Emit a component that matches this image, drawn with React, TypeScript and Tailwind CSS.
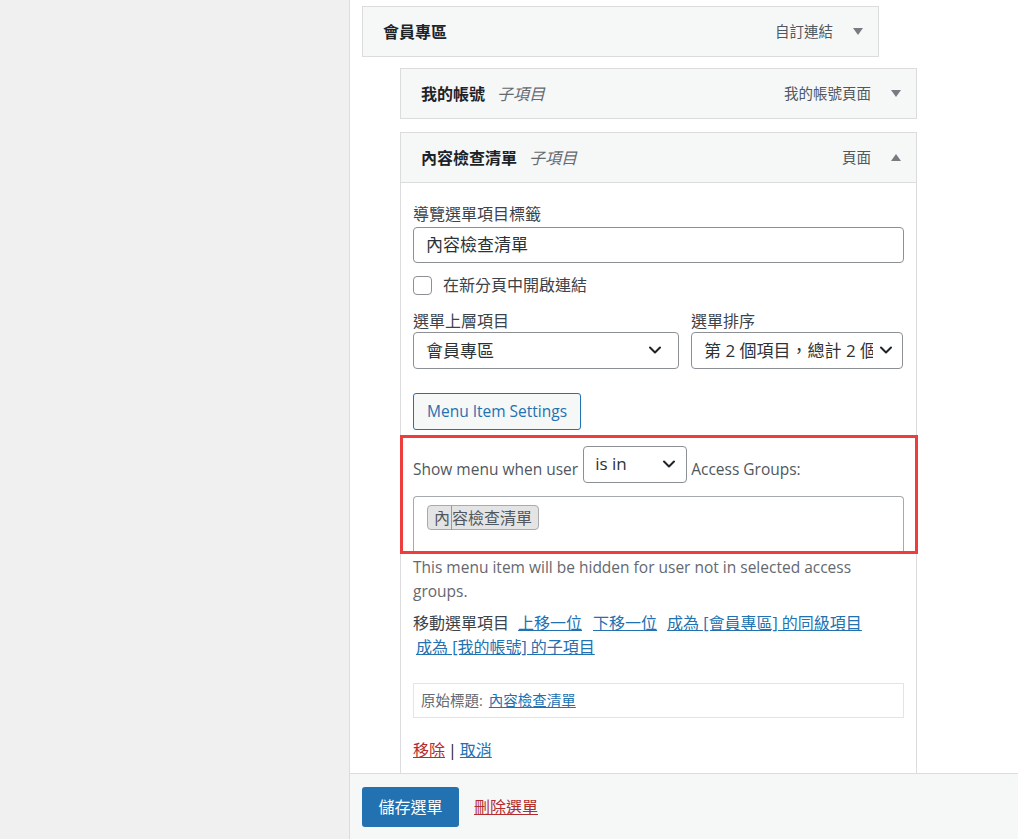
import React from 'react';

const Caret = ({ up = false }: { up?: boolean }) => (
  <svg width="10" height="7" viewBox="0 0 10 7" className="fill-[#787c82]">
    {up ? <path d="M0 7 L5 0 L10 7 Z" /> : <path d="M0 0 L10 0 L5 7 Z" />}
  </svg>
);

const Chevron = () => (
  <svg width="14" height="9" viewBox="0 0 14 9" fill="none" stroke="#1d2327" strokeWidth="2" strokeLinecap="round" strokeLinejoin="round">
    <path d="M2 1.5 L7 6.5 L12 1.5" />
  </svg>
);

interface ItemHeaderProps {
  title: string;
  sub?: string;
  type: string;
  open?: boolean;
}

const ItemHeader = ({ title, sub, type, open }: ItemHeaderProps) => (
  <div className="flex h-[51px] items-center border border-[#dcdcde] bg-[#f6f7f7] pl-[20px] pr-[15px]">
    <span className="text-[16px] font-bold leading-[22px] text-[#1d2327]">{title}</span>
    {sub && <span className="ml-[12px] text-[16px] italic leading-[22px] text-[#646970]">{sub}</span>}
    <span className="ml-auto text-[14.5px] leading-[22px] text-[#50575e]">{type}</span>
    <span className="ml-[20px] flex">
      <Caret up={open} />
    </span>
  </div>
);

const SelectBox = ({ value, className }: { value: string; className: string }) => (
  <div className={`flex h-[37px] items-center rounded-[4px] border border-[#8c8f94] bg-white pl-[12px] ${className}`}>
    <span className="min-w-0 flex-1 overflow-hidden whitespace-nowrap text-[17px] leading-[24px] text-[#2c3338]">{value}</span>
    <span className="ml-[6px] flex shrink-0">
      <Chevron />
    </span>
  </div>
);

const MoveLink = ({ children, className = '' }: { children: React.ReactNode; className?: string }) => (
  <a className={`inline-block whitespace-nowrap text-[#2271b1] underline ${className}`}>{children}</a>
);

export default function App() {
  return (
    <div className="flex h-[839px] w-[1018px] overflow-hidden bg-white font-['Open_Sans','Noto_Sans_CJK_TC',sans-serif] text-[#3c434a]">
      <div className="w-[350px] shrink-0 border-r border-[#dcdcde] bg-[#f0f0f1]" />

      <div className="flex min-w-0 flex-1 flex-col">
        <div className="h-[773px] overflow-hidden pl-[12px] pt-[6px]">
          <div className="w-[517px]">
            <ItemHeader title="會員專區" type="自訂連結" />
          </div>

          <div className="ml-[38px] mt-[11px] w-[517px]">
            <ItemHeader title="我的帳號" sub="子項目" type="我的帳號頁面" />
          </div>

          <div className="ml-[38px] mt-[13px] w-[517px]">
            <ItemHeader title="內容檢查清單" sub="子項目" type="頁面" open />

            <div className="border-x border-[#dcdcde] px-[12px] pb-[40px] pt-[20px]">
              <div className="text-[16px] leading-[22px] text-[#3c434a]">導覽選單項目標籤</div>
              <div className="mt-[2px] flex h-[36px] items-center rounded-[4px] border border-[#8c8f94] px-[12px] text-[17px] text-[#2c3338]">
                內容檢查清單
              </div>

              <label className="mt-[11px] flex h-[22px] items-center">
                <span className="h-[19px] w-[19px] rounded-[4px] border border-[#8c8f94] bg-white" />
                <span className="ml-[11px] text-[16px] leading-[22px]">在新分頁中開啟連結</span>
              </label>

              <div className="mt-[14px] flex gap-[12px]">
                <div className="w-[266px]">
                  <div className="text-[16px] leading-[22px]">選單上層項目</div>
                  <SelectBox className="w-[266px] pr-[16px]" value="會員專區" />
                </div>
                <div className="w-[212px] min-w-0">
                  <div className="text-[16px] leading-[22px]">選單排序</div>
                  <SelectBox className="w-[212px] pr-[9px]" value="第 2 個項目，總計 2 個項目" />
                </div>
              </div>

              <button className="mt-[24px] flex h-[37px] items-center rounded-[3px] border border-[#2271b1] bg-[#f6f7f7] px-[13px] text-[15.5px] text-[#2271b1]">
                Menu Item Settings
              </button>

              <div className="relative mt-[16px]">
                <div className="flex items-end text-[15.5px] leading-[22px] text-[#50575e]">
                  <span className="pb-[3px]">Show menu when user</span>
                  <div className="ml-[5px] mr-[4px] flex h-[37px] w-[104px] items-center rounded-[4px] border border-[#8c8f94] pl-[11px] pr-[10px]">
                    <span className="flex-1 pb-[2px] text-[17px] text-[#2c3338]">is in</span>
                    <Chevron />
                  </div>
                  <span className="pb-[3px]">Access Groups:</span>
                </div>
                <div className="mt-[13px] h-[57px] rounded-t-[4px] border-x border-t border-[#a7aaad] px-[13px] pt-[8px]">
                  <span className="inline-flex h-[25px] items-center rounded-[4px] border border-[#aaa] bg-[#e4e4e4] pl-[6px] pr-[6px] text-[16px] text-[#50575e]">
                    <span className="pr-px">內</span>
                    <span className="border-l border-[#999]">容檢查清單</span>
                  </span>
                </div>
                <div className="pointer-events-none absolute -left-[13px] -right-[14px] -top-[11px] bottom-[-1px] border-[3px] border-[#ee3d3d]" />
              </div>

              <p className="mt-[2px] pr-[6px] text-[15.5px] leading-[24px] text-[#646970]">
                This menu item will be hidden for user not in selected access groups.
              </p>

              <p className="mt-[8px] text-[16px] leading-[24px] text-[#3c434a]">
                <span className="mr-[9px]">移動選單項目</span>
                <MoveLink>上移一位</MoveLink>
                <MoveLink className="ml-[11px]">下移一位</MoveLink>
                <MoveLink className="ml-[10px]">成為 [會員專區] 的同級項目</MoveLink>
                <MoveLink className="ml-[3px]">成為 [我的帳號] 的子項目</MoveLink>
              </p>

              <div className="mt-[24px] flex h-[35px] items-center border border-[#e2e4e7] px-[7px] text-[14.5px]">
                <span className="text-[#646970]">原始標題:</span>
                <a className="ml-[6px] text-[#2271b1] underline">內容檢查清單</a>
              </div>

              <div className="mt-[20px] text-[16px] leading-[24px]">
                <a className="text-[#b32d2e] underline">移除</a>
                <span className="mx-[3px] text-[#1d2327]">|</span>
                <a className="text-[#2271b1] underline">取消</a>
              </div>
            </div>
          </div>
        </div>

        <div className="flex flex-1 items-center border-t border-[#dcdcde] bg-[#f6f7f7] pl-[12px]">
          <button className="h-[40px] w-[97px] rounded-[3px] bg-[#2271b1] text-[16px] text-white">儲存選單</button>
          <a className="ml-[15px] text-[16px] text-[#b32d2e] underline">刪除選單</a>
        </div>
      </div>
    </div>
  );
}
